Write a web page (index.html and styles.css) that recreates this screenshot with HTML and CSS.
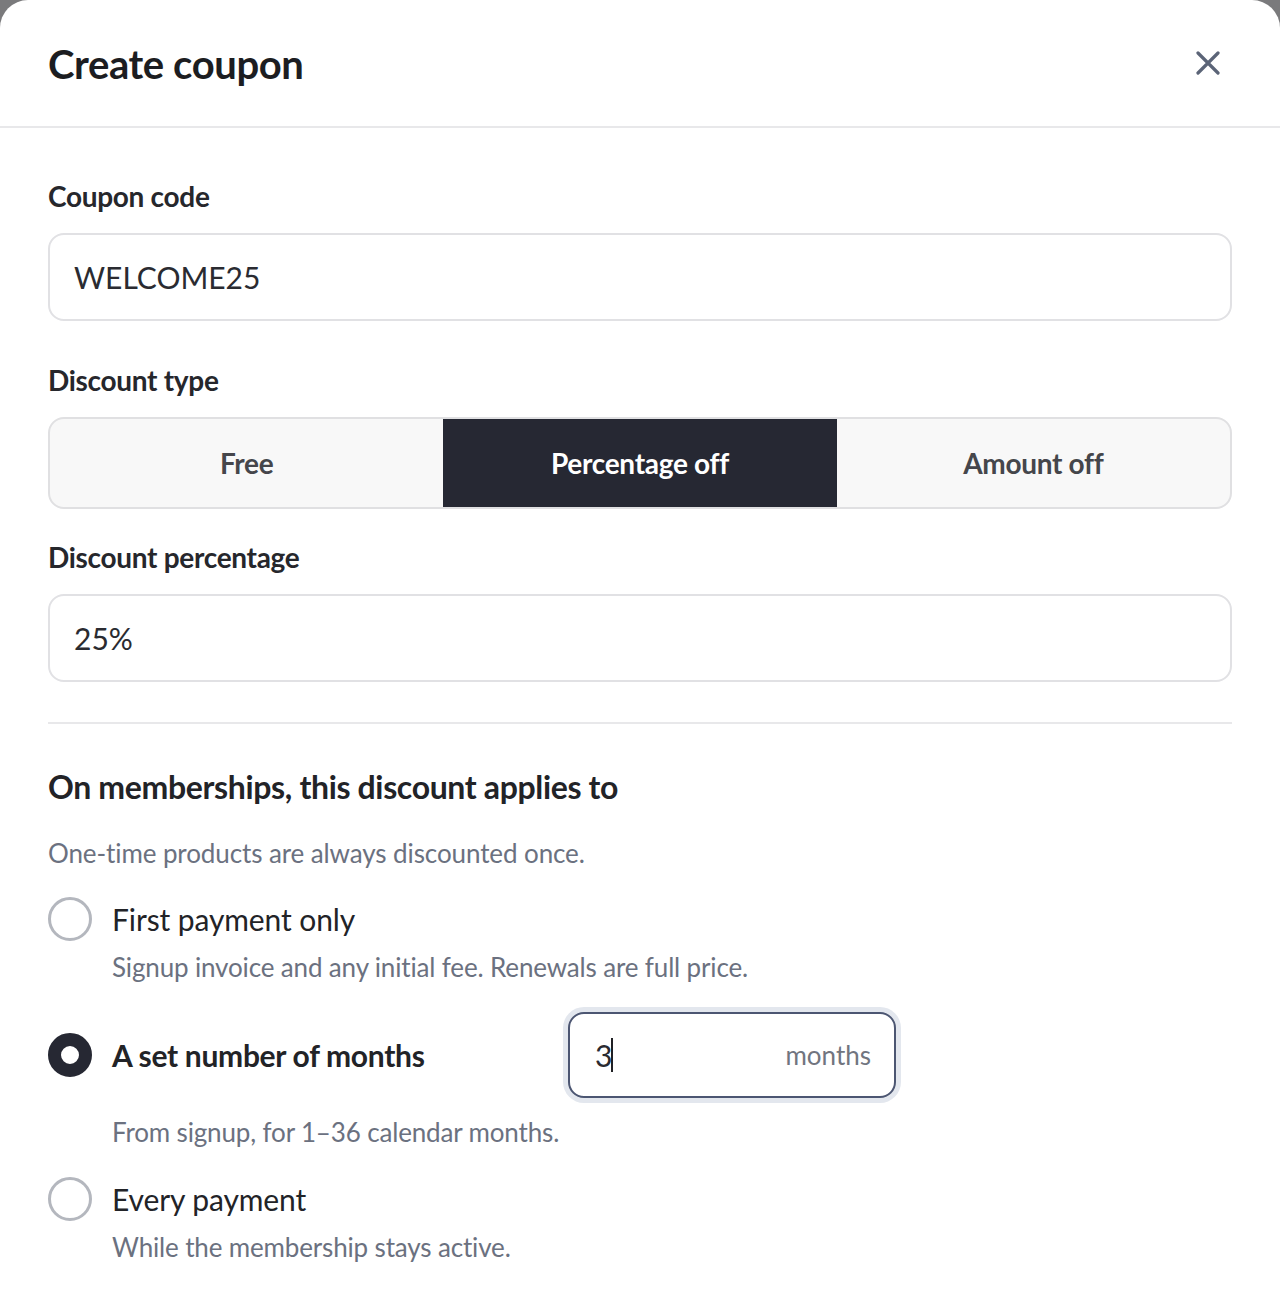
FILE: index.html
```html
<!DOCTYPE html>
<html lang="en">
<head>
<meta charset="utf-8">
<title>Create coupon</title>
<link rel="stylesheet" href="styles.css">
</head>
<body>
<div class="modal">
  <header class="modal-header">
    <h1 class="modal-title">Create coupon</h1>
    <button class="close-btn" aria-label="Close">
      <svg width="24" height="24" viewBox="0 0 24 24" fill="none" stroke="currentColor" stroke-width="3.2" stroke-linecap="round"><path d="M2 2L22 22M22 2L2 22"/></svg>
    </button>
  </header>
  <div class="modal-body">
    <div class="field field--first">
      <label class="field-label">Coupon code</label>
      <input class="text-input" type="text" value="WELCOME25">
    </div>
    <div class="field field--type">
      <label class="field-label">Discount type</label>
      <div class="segmented">
        <button class="segment">Free</button>
        <button class="segment segment--active">Percentage off</button>
        <button class="segment">Amount off</button>
      </div>
    </div>
    <div class="field">
      <label class="field-label">Discount percentage</label>
      <input class="text-input" type="text" value="25%">
    </div>
    <hr class="divider">
    <h2 class="section-title">On memberships, this discount applies to</h2>
    <p class="section-note">One-time products are always discounted once.</p>
    <div class="options">
      <div class="option">
        <div class="option-row">
          <span class="radio"></span>
          <span class="option-label">First payment only</span>
        </div>
        <p class="option-desc">Signup invoice and any initial fee. Renewals are full price.</p>
      </div>
      <div class="option option--selected">
        <div class="option-row option-row--field">
          <span class="radio radio--checked"></span>
          <span class="option-label option-label--bold">A set number of months</span>
          <div class="months-field">
            <span class="months-value">3<span class="caret"></span></span>
            <span class="months-unit">months</span>
          </div>
        </div>
        <p class="option-desc option-desc--field">From signup, for 1–36 calendar months.</p>
      </div>
      <div class="option">
        <div class="option-row">
          <span class="radio"></span>
          <span class="option-label">Every payment</span>
        </div>
        <p class="option-desc">While the membership stays active.</p>
      </div>
    </div>
  </div>
</div>
</body>
</html>
```
FILE: styles.css
```css
* { box-sizing: border-box; }

html, body {
  margin: 0;
  padding: 0;
  background: #7a7a7c;
}

body {
  font-family: Lato, "Open Sans", Arial, sans-serif;
  color: #222327;
}

.modal {
  background: #ffffff;
  border-radius: 28px 28px 0 0;
  min-height: 1306px;
  width: 1280px;
}

.modal-header {
  display: flex;
  align-items: center;
  justify-content: space-between;
  padding: 38px 48px 36px 48px;
  border-bottom: 2px solid #e8e8ea;
}

.modal-title {
  margin: 0;
  font-size: 40px;
  line-height: 52px;
  font-weight: 700;
  color: #1c1d21;
  letter-spacing: -0.4px;
}

.close-btn {
  width: 48px;
  height: 48px;
  display: flex;
  align-items: center;
  justify-content: center;
  border: none;
  background: transparent;
  color: #5b6477;
  padding: 0;
  margin-top: -2px;
}

.modal-body {
  padding: 50px 48px 0 48px;
}

.field-label {
  display: block;
  font-size: 28px;
  line-height: 36px;
  font-weight: 700;
  color: #26272c;
  margin-bottom: 19px;
  letter-spacing: -0.3px;
}

.field--first { margin-bottom: 41px; }
.field--type { margin-bottom: 30px; }

.text-input {
  display: block;
  width: 100%;
  height: 88px;
  border: 2px solid #e1e1e4;
  border-radius: 16px;
  padding: 0 24px;
  font-family: Lato, Arial, sans-serif;
  font-size: 30px;
  color: #2a2b31;
  background: #ffffff;
  outline: none;
}

.segmented {
  display: grid;
  grid-template-columns: 1fr 1fr 1fr;
  height: 92px;
  border: 2px solid #e0e0e2;
  border-radius: 16px;
  background: #f8f8f8;
  overflow: hidden;
}

.segment {
  border: none;
  background: transparent;
  font-family: Lato, Arial, sans-serif;
  font-size: 28px;
  font-weight: 700;
  color: #45464b;
  letter-spacing: -0.3px;
  padding: 0;
}

.segment--active {
  background: #262833;
  color: #ffffff;
}

.divider {
  border: none;
  height: 2px;
  background: #e8e8ea;
  margin: 40px 0 43px 0;
}

.section-title {
  margin: 0 0 29px 0;
  font-size: 32px;
  line-height: 40px;
  font-weight: 700;
  color: #222327;
  letter-spacing: -0.35px;
}

.section-note {
  margin: 0 0 27px 0;
  font-size: 26px;
  line-height: 34px;
  color: #6b7180;
  letter-spacing: -0.1px;
}

.options {
  display: flex;
  flex-direction: column;
  gap: 28px;
}

.option-row {
  display: flex;
  align-items: center;
  gap: 20px;
  min-height: 44px;
}

.radio {
  flex: none;
  width: 44px;
  height: 44px;
  border-radius: 50%;
  border: 3px solid #b4b7be;
  background: #ffffff;
}

.radio--checked {
  border: 13px solid #262833;
}

.option-label {
  font-size: 30px;
  line-height: 44px;
  color: #222327;
  letter-spacing: -0.1px;
}

.option-label--bold {
  font-weight: 700;
  width: 436px;
  letter-spacing: -0.3px;
}

.option-desc {
  margin: 9px 0 0 64px;
  font-size: 26px;
  line-height: 34px;
  color: #6b7180;
  letter-spacing: -0.15px;
}

.option-desc--field { margin-top: 17px; }

.months-field {
  width: 328px;
  height: 86px;
  border: 2px solid #4c5672;
  border-radius: 16px;
  box-shadow: 0 0 0 5px #e3e7ee;
  padding: 0 23px 0 25px;
  display: flex;
  align-items: center;
  justify-content: space-between;
  background: #ffffff;
}

.months-value {
  display: flex;
  align-items: center;
  font-size: 30px;
  color: #2a2b31;
}

.caret {
  display: inline-block;
  width: 2px;
  height: 34px;
  background: #1f2024;
  margin-left: -1px;
}

.months-unit {
  font-size: 26px;
  color: #71757f;
}
```
